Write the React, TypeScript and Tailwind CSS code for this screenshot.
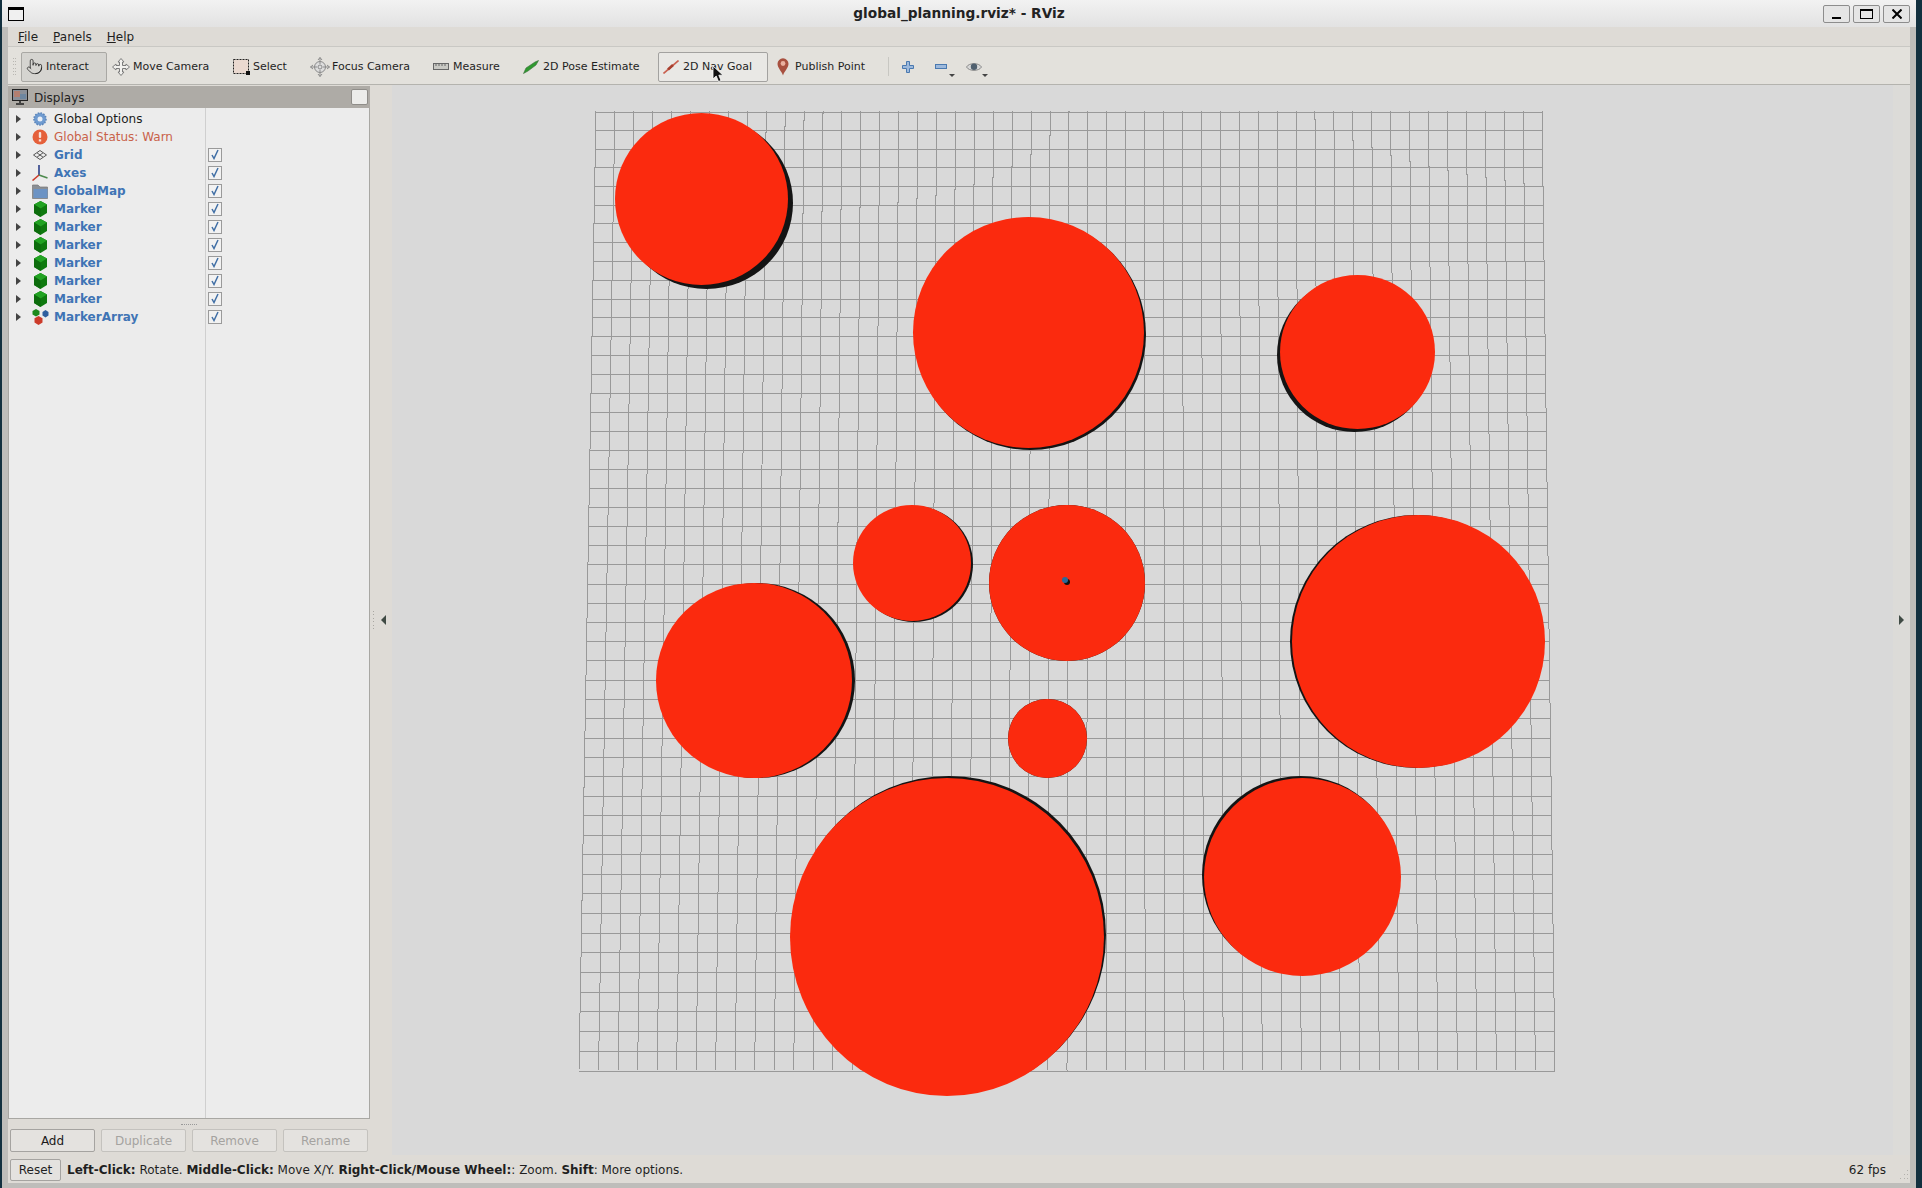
import React from "react";
import { Pointer } from "lucide-react";

const TL = [596, 111.5], BL = [579, 1070.5], TR = [1542, 111.5], BR = [1555, 1070.5];
const wT = TR[0] - TL[0], wB = BR[0] - BL[0];
function pt(u: number, v: number): [number, number] {
  const w = 1 / ((1 - v) / wT + v / wB);
  const y = (TL[1] * (1 - v) / wT + BL[1] * v / wB) * w;
  const t = (y - TL[1]) / (BL[1] - TL[1]);
  const xl = TL[0] + (BL[0] - TL[0]) * t;
  return [xl + u * w, y];
}

function Grid() {
  const lines: React.ReactNode[] = [];
  for (let i = 0; i <= 50; i++) {
    const [x1, y1] = pt(i / 50, 0);
    const [x2, y2] = pt(i / 50, 1);
    lines.push(<line key={"v" + i} x1={x1} y1={y1} x2={x2} y2={y2} stroke="#999999" strokeWidth={1} shapeRendering="crispEdges" />);
    const [a, b] = pt(0, i / 50);
    const [c] = pt(1, i / 50);
    const yy = Math.round(b) + 0.5;
    lines.push(<line key={"h" + i} x1={a} y1={yy} x2={c} y2={yy} stroke="#999999" strokeWidth={1} shapeRendering="crispEdges" />);
  }
  return <g>{lines}</g>;
}

const circles = [
  { x0: 615, x1: 788, y0: 113, y1: 285, dx: 5, dy: 4 },
  { x0: 913, x1: 1144, y0: 217, y1: 448, dx: 2, dy: 2 },
  { x0: 1280, x1: 1435, y0: 275, y1: 429, dx: -3, dy: 3 },
  { x0: 853, x1: 971, y0: 505, y1: 621, dx: 2, dy: 1 },
  { x0: 989, x1: 1145, y0: 505, y1: 661, dx: 0, dy: 0 },
  { x0: 656, x1: 852, y0: 583, y1: 778, dx: 3, dy: 0 },
  { x0: 1292, x1: 1545, y0: 515, y1: 768, dx: -2, dy: 0 },
  { x0: 1008, x1: 1087, y0: 699, y1: 778, dx: 0, dy: 0 },
  { x0: 790, x1: 1104, y0: 778, y1: 1096, dx: 2, dy: -2 },
  { x0: 1204, x1: 1401, y0: 778, y1: 976, dx: -2, dy: -2 },
];

function Scene() {
  return (
    <svg width={1501} height={1070} viewBox="392 85 1501 1070" className="block">
      <Grid />
      {circles.map((c, i) => {
        const cx = (c.x0 + c.x1) / 2, cy = (c.y0 + c.y1) / 2, rx = (c.x1 - c.x0) / 2, ry = (c.y1 - c.y0) / 2;
        return (
          <g key={i}>
            <ellipse cx={cx + c.dx} cy={cy + c.dy} rx={rx} ry={ry} fill="#141414" />
            <ellipse cx={cx} cy={cy} rx={rx} ry={ry} fill="#fb2a0e" />
          </g>
        );
      })}
      <circle cx={1067} cy={582} r={3} fill="#111111" />
      <circle cx={1065} cy={580} r={3} fill="#2a6a9a" />
    </svg>
  );
}

function ToolBtn({ w, icon, label, ml, state }: { w: number; icon: React.ReactNode; label: string; ml: number; state?: "on" | "hover" }) {
  const cls = state === "on"
    ? "border border-[#a9a8a4] bg-[#d5d4d0] rounded-[2px]"
    : state === "hover"
    ? "border border-[#a3a2a0] bg-[#e9e8e5] rounded-[2px]"
    : "border border-transparent";
  return (
    <div className={`flex h-[30px] items-center shrink-0 text-[11px] ${cls}`} style={{ width: w, marginLeft: ml }}>
      <div className="flex w-[24px] shrink-0 items-center justify-center">{icon}</div>
      <span className="whitespace-nowrap pt-[2px]">{label}</span>
    </div>
  );
}

const I = {
  move: (
    <svg width="18" height="18" viewBox="0 0 18 18" fill="#f2f1ee" stroke="#7b7b7b" strokeWidth="1">
      <path d="M9 .5 12 4H10.5V7.5H14V6L17.5 9 14 12V10.5H10.5V14H12L9 17.5 6 14H7.5V10.5H4V12L.5 9 4 6V7.5H7.5V4H6Z" />
    </svg>
  ),
  select: (
    <svg width="17" height="16" viewBox="0 0 17 16">
      <rect x="0.5" y="0.5" width="15" height="14" fill="#ead9d0" stroke="#222" strokeDasharray="2 1" />
      <rect x="13" y="12" width="4" height="4" fill="#111" />
    </svg>
  ),
  focus: (
    <svg width="20" height="20" viewBox="0 0 20 20" fill="none" stroke="#8b8b8b">
      <circle cx="10" cy="10" r="5.5" fill="#ddd" />
      <circle cx="10" cy="10" r="2" />
      <path d="M10 0.5V7M10 13V19.5M0.5 10H7M13 10H19.5M10 .5 8 3M10 .5 12 3M10 19.5 8 17M10 19.5 12 17M.5 10 3 8M.5 10 3 12M19.5 10 17 8M19.5 10 17 12" />
    </svg>
  ),
  measure: (
    <svg width="16" height="8" viewBox="0 0 16 8">
      <rect x="0.5" y="0.5" width="15" height="6" fill="#c9c9c4" stroke="#666" />
      <path d="M3 1V3M6 1V3M9 1V3M12 1V3" stroke="#666" />
    </svg>
  ),
  pose: (
    <svg width="16" height="14" viewBox="0 0 16 14">
      <path d="M0.5 13.5 3 8 12 2 15.5 .5 13 5 5 11Z" fill="#2f9a2f" stroke="#3d6b3d" strokeWidth="0.6" />
    </svg>
  ),
  nav: (
    <svg width="16" height="14" viewBox="0 0 16 14">
      <path d="M0.5 13.5 15.5 .5" stroke="#c9604f" strokeWidth="1.6" />
      <path d="M5 9.5 10 5" stroke="#a8402f" strokeWidth="2.6" />
    </svg>
  ),
  pin: (
    <svg width="12" height="18" viewBox="0 0 12 18">
      <path d="M6 17.5C4.5 13 .5 10 .5 5.8A5.5 5.5 0 0 1 11.5 5.8C11.5 10 7.5 13 6 17.5Z" fill="#a8503f" />
      <circle cx="6" cy="5.5" r="2.4" fill="#e9b09f" />
    </svg>
  ),
};

const Cube = () => (
  <svg width="15" height="16" viewBox="0 0 15 16" className="block">
    <path d="M7.5 0 14 3.5V12L7.5 16 1 12V3.5Z" fill="#0f7a0f" />
    <path d="M7.5 0 14 3.5 7.5 7.5 1 3.5Z" fill="#22a322" />
    <path d="M1 3.5 7.5 7.5V16L1 12Z" fill="#0d6d0d" />
  </svg>
);

const tree: { label: string; color: string; bold?: boolean; check?: boolean; icon: React.ReactNode }[] = [
  {
    label: "Global Options", color: "#1a1a1a",
    icon: (
      <svg width="14" height="14" viewBox="0 0 14 14">
        <circle cx="7" cy="7" r="6" fill="#6f9bd0" stroke="#5d86ba" strokeWidth="1.6" strokeDasharray="1.6 1.2" />
        <circle cx="7" cy="7" r="2.5" fill="#e8eef6" />
      </svg>
    ),
  },
  {
    label: "Global Status: Warn", color: "#c9624a",
    icon: (
      <svg width="16" height="16" viewBox="0 0 16 16">
        <circle cx="8" cy="8" r="7.5" fill="#e5603a" />
        <rect x="6.8" y="3" width="2.4" height="6" rx="1" fill="#f8e0d8" />
        <rect x="6.8" y="10.3" width="2.4" height="2.2" fill="#f8e0d8" />
      </svg>
    ),
  },
  {
    label: "Grid", color: "#3f74b5", bold: true, check: true,
    icon: (
      <svg width="14" height="10" viewBox="0 0 14 10" fill="none" stroke="#555" strokeWidth="1">
        <path d="M7 .5 13.5 5 7 9.5 .5 5Z" />
        <path d="M4 2.8 10 7.2M10 2.8 4 7.2" />
      </svg>
    ),
  },
  {
    label: "Axes", color: "#3f74b5", bold: true, check: true,
    icon: (
      <svg width="16" height="16" viewBox="0 0 16 16" fill="none" strokeWidth="1.6">
        <path d="M7 10V0" stroke="#2c3f88" />
        <path d="M7 10 .5 15.5" stroke="#cc3b2a" />
        <path d="M7 10 15.5 13" stroke="#4d8a4d" />
      </svg>
    ),
  },
  {
    label: "GlobalMap", color: "#3f74b5", bold: true, check: true,
    icon: (
      <svg width="16" height="15" viewBox="0 0 16 15">
        <path d="M.5 1H6L8 3H15.5V14.5H.5Z" fill="#8a8f95" stroke="#777" strokeWidth="0.7" />
        <rect x="1.5" y="5" width="14" height="9" fill="#6c93c4" />
      </svg>
    ),
  },
  ...Array.from({ length: 6 }, () => ({ label: "Marker", color: "#3f74b5", bold: true, check: true, icon: <Cube /> })),
  {
    label: "MarkerArray", color: "#3f74b5", bold: true, check: true,
    icon: (
      <svg width="17" height="16" viewBox="0 0 17 16">
        <path d="M4 0 7.5 2V5.5L4 7.5 .5 5.5V2Z" fill="#1d8a1d" />
        <path d="M13.5 1 16.5 3V6.5L13.5 8.5 10.500 6.500V3Z" fill="#2f5f9f" />
        <path d="M6.500 7 10.500 9.200V13.500L6.500 16 2.500 13.500V9.200Z" fill="#cc3b2a" />
      </svg>
    ),
  },
];

function Row({ r }: { r: (typeof tree)[number] }) {
  return (
    <div className="flex h-[18px] items-center">
      <div className="flex w-[196px] shrink-0 items-center">
        <div className="ml-[7px] h-0 w-0 border-y-[4.5px] border-l-[5px] border-y-transparent border-l-[#444]" />
        <div className="ml-[7px] flex w-[24px] shrink-0 items-center justify-center">{r.icon}</div>
        <span className={`ml-[2px] whitespace-nowrap ${r.bold ? "font-bold" : ""}`} style={{ color: r.color }}>{r.label}</span>
      </div>
      {r.check && (
        <div className="mb-[1px] ml-[3px] flex h-[14px] w-[14px] items-center justify-center border border-[#9a9a9a] bg-[#f2f2f2]">
          <svg width="10" height="11" viewBox="0 0 10 11" fill="none" stroke="#3f6ea5" strokeWidth="1.5"><path d="M2 6 4 9.500 8 1" /></svg>
        </div>
      )}
    </div>
  );
}

function DockBtn({ label, disabled, w }: { label: string; disabled?: boolean; w: number }) {
  return (
    <div className={`flex h-[23px] items-center justify-center rounded-[2px] border ${disabled ? "border-[#c4c2be] text-[#a5a3a0]" : "border-[#a5a3a0] text-[#1a1a1a]"} bg-[#e4e2df]`} style={{ width: w }}>
      {label}
    </div>
  );
}

export default function App() {
  return (
    <div className="relative flex h-[1188px] w-[1922px] overflow-hidden bg-[#12303f] font-['DejaVu_Sans',sans-serif] text-[12px] text-[#1f1f1f]">
      <div className="ml-[2px] flex w-[1914px] flex-col">
        <div className="relative flex h-[27px] shrink-0 items-center justify-center bg-gradient-to-b from-[#f2f2f2] to-[#e2e2e2]">
          <div className="absolute left-[6px] top-[7px] h-[14px] w-[16px] border border-black border-t-[3px] bg-[#f0f0f0]" />
          <span className="text-[13.700px] font-bold text-[#222]">global_planning.rviz* - RViz</span>
          <div className="absolute right-[6px] top-[5px] flex gap-[3px]">
            {["min", "max", "close"].map((k) => (
              <div key={k} className="flex h-[18px] w-[27px] items-center justify-center rounded-[2px] border border-[#8d8d8d] bg-[#e5e5e5]">
                {k === "min" && <div className="mt-[7px] h-[2px] w-[9px] bg-black" />}
                {k === "max" && <div className="h-[10px] w-[13px] border border-black border-t-[2px]" />}
                {k === "close" && (
                  <svg width="10" height="10" viewBox="0 0 10 10" stroke="black" strokeWidth="2"><path d="M.5 .5 9.500 9.500M9.500 .5 .5 9.500" /></svg>
                )}
              </div>
            ))}
          </div>
        </div>

        <div className="flex flex-1 bg-[#bebdba] pb-[5px] pl-[6px] pr-[6px]">
          <div className="flex w-[1902px] flex-col bg-[#dedbd6]">
            {/* menu */}
            <div className="flex h-[20px] shrink-0 items-center gap-[15px] border-b border-[#c9c8c4] pl-[10px]">
              <span><u>F</u>ile</span>
              <span><u>P</u>anels</span>
              <span><u>H</u>elp</span>
            </div>
            {/* toolbar */}
            <div className="flex h-[38px] shrink-0 items-center border-b border-[#b4b3ae] bg-[#e3e1dc] pt-[2px]">
              <div className="ml-[5px] grid h-[17px] w-[4px] grid-cols-2 content-between">
                {Array.from({ length: 12 }, (_, i) => (
                  <div key={i} className="h-px w-px bg-[#b9b7b2]" />
                ))}
              </div>
              <ToolBtn ml={4} w={86} state="on" icon={<Pointer size={17} strokeWidth={1} color="#111" />} label="Interact" />
              <ToolBtn ml={1} w={120} icon={I.move} label="Move Camera" />
              <ToolBtn ml={0} w={79} icon={I.select} label="Select" />
              <ToolBtn ml={0} w={121} icon={I.focus} label="Focus Camera" />
              <ToolBtn ml={0} w={90} icon={I.measure} label="Measure" />
              <ToolBtn ml={0} w={135} icon={I.pose} label="2D Pose Estimate" />
              <ToolBtn ml={5} w={110} state="hover" icon={I.nav} label="2D Nav Goal" />
              <ToolBtn ml={2} w={108} icon={I.pin} label="Publish Point" />
              <div className="ml-[10px] h-[19px] w-px bg-[#c8c7c2]" />
              <div className="ml-[13px] flex items-center">
                <svg width="12" height="12" viewBox="0 0 12 12"><path d="M4.500 .5H7.500V4.500H11.500V7.500H7.500V11.500H4.500V7.500H.5V4.500H4.500Z" fill="#9db9dc" stroke="#4a79b0" /></svg>
              </div>
              <div className="relative ml-[21px] flex items-center">
                <div className="h-[5px] w-[12px] border border-[#4a79b0] bg-[#9db9dc]" />
                <div className="absolute -right-[8px] top-[10px] h-0 w-0 border-x-[3px] border-t-[3px] border-x-transparent border-t-[#444]" />
              </div>
              <div className="relative ml-[19px] flex items-center">
                <svg width="16" height="12" viewBox="0 0 16 12">
                  <path d="M.5 6C3 1.500 13 1.500 15.500 6 13 10.500 3 10.500 .5 6Z" fill="#d8d8d8" stroke="#8a8a8a" />
                  <circle cx="8" cy="5.800" r="3.200" fill="#50606f" />
                </svg>
                <div className="absolute -right-[6px] top-[13px] h-0 w-0 border-x-[3px] border-t-[3px] border-x-transparent border-t-[#444]" />
              </div>
            </div>

            {/* content */}
            <div className="flex min-h-0 flex-1">
              <div className="flex w-[362px] shrink-0 flex-col pt-[1px]">
                <div className="flex h-[22px] shrink-0 items-center bg-[#aeaba6] pl-[4px] pr-[2px] text-[#222]">
                  <svg width="16" height="16" viewBox="0 0 16 16" className="mr-[6px]">
                    <rect x="0.5" y="0.5" width="15" height="11" fill="#8a8f98" stroke="#222" />
                    <rect x="2" y="2" width="6" height="6" fill="#b47f70" />
                    <rect x="8" y="5" width="6" height="5" fill="#6d86a0" />
                    <path d="M8 12V14M4 15H12" stroke="#222" strokeWidth="1.500" />
                  </svg>
                  <span className="pt-[1px]">Displays</span>
                  <div className="ml-auto h-[16px] w-[17px] rounded-[2px] border border-[#8f8d89] bg-[#ececea]" />
                </div>
                <div className="flex min-h-0 flex-1 border border-t-0 border-[#a8a7a3] bg-[#ececec]">
                  <div className="w-[196px] shrink-0 pt-[2px]">
                    {tree.map((r, i) => (
                      <div key={i} className="w-[361px]"><Row r={r} /></div>
                    ))}
                  </div>
                  <div className="h-full w-px bg-[#cfcfcf]" />
                </div>
                <div className="flex h-[10px] shrink-0 items-center justify-center">
                  <div className="h-px w-[16px] border-t border-dotted border-[#999]" />
                </div>
                <div className="flex h-[26px] shrink-0 gap-[6px] pl-[2px]">
                  <DockBtn label="Add" w={85} />
                  <DockBtn label="Duplicate" disabled w={85} />
                  <DockBtn label="Remove" disabled w={85} />
                  <DockBtn label="Rename" disabled w={85} />
                </div>
              </div>

              <div className="flex w-[22px] shrink-0 items-center bg-[#dedbd6]">
                <div className="ml-[3px] flex h-[18px] w-px flex-col justify-between">
                  {Array.from({ length: 6 }, (_, i) => (
                    <div key={i} className="h-px w-px bg-[#a9a7a2]" />
                  ))}
                </div>
                <div className="ml-[7px] h-0 w-0 border-y-[5px] border-r-[5px] border-y-transparent border-r-[#3f4a44]" />
              </div>
              <div className="min-w-0 flex-1 bg-[#d9d9d9]"><Scene /></div>
              <div className="flex w-[17px] shrink-0 items-center justify-center bg-[#dcdbd8]">
                <div className="h-0 w-0 border-y-[5px] border-l-[5px] border-y-transparent border-l-[#3f4a44]" />
              </div>
            </div>

            {/* status */}
            <div className="relative flex h-[28px] shrink-0 items-center pl-[2px] pr-[24px] pt-[2px]">
              <div className="flex h-[22px] w-[51px] items-center justify-center rounded-[2px] border border-[#a5a3a0] bg-[#e4e2df]">Reset</div>
              <span className="ml-[6px] whitespace-nowrap">
                <b>Left-Click:</b> Rotate. <b>Middle-Click:</b> Move X/Y. <b>Right-Click/Mouse Wheel:</b>: Zoom. <b>Shift</b>: More options.
              </span>
              <span className="ml-auto">62 fps</span>
              <svg width="10" height="11" viewBox="0 0 10 11" className="absolute bottom-[2px] right-[1px]" fill="#b3b1ac">
                <rect x="8" y="0" width="1" height="1" />
                <rect x="5" y="4" width="1" height="1" /><rect x="8" y="4" width="1" height="1" />
                <rect x="1" y="8" width="1" height="1" /><rect x="5" y="8" width="1" height="1" /><rect x="8" y="8" width="1" height="1" />
              </svg>
            </div>
          </div>
        </div>
      </div>
      <svg width="14" height="18" viewBox="0 0 14 18" className="absolute left-[712px] top-[65px]">
        <path d="M1 1V14L4.200 11 6.500 16.500 9 15.500 6.800 10.200H11Z" fill="#111" stroke="#fff" strokeWidth="0.8" />
      </svg>
    </div>
  );
}
